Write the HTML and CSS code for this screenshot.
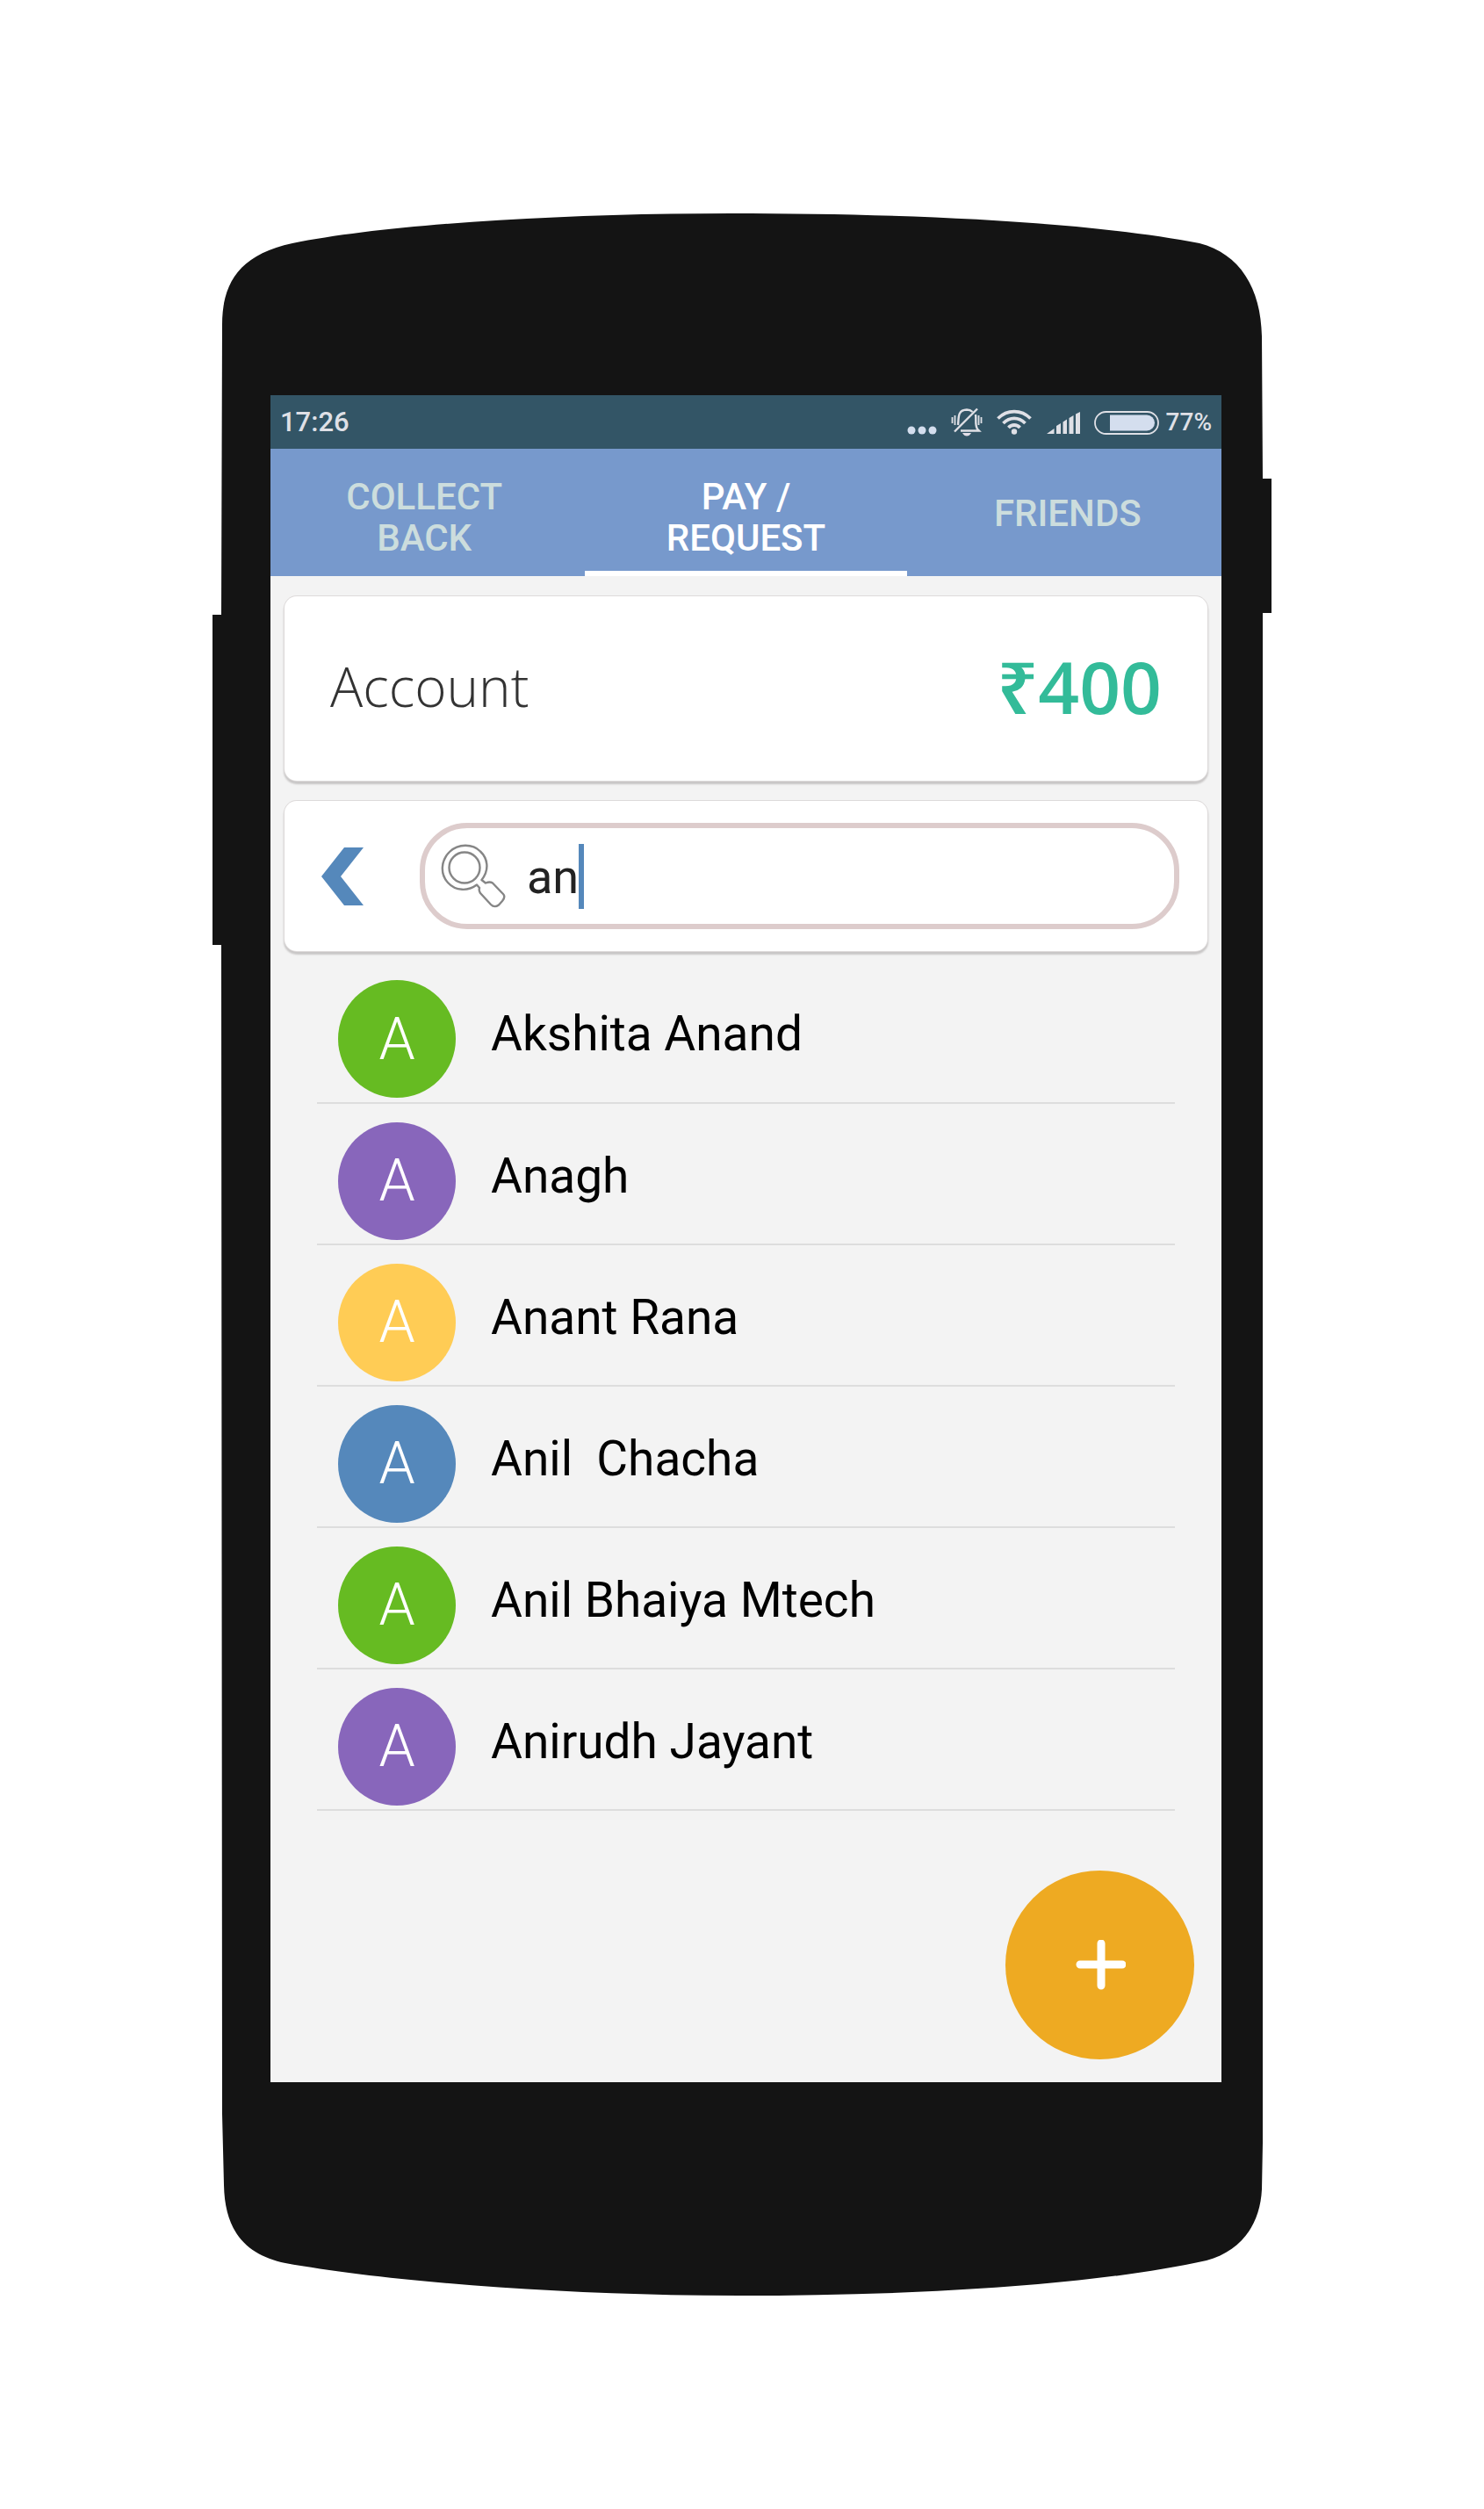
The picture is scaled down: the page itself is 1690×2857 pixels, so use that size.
FILE: index.html
```html
<!DOCTYPE html>
<html lang="en">
<head>
<meta charset="utf-8">
<meta name="viewport" content="width=device-width, initial-scale=1">
<title>Pay / Request</title>
<link rel="stylesheet" href="styles.css">
</head>
<body>
<div class="phone">
  <svg class="phone-body" viewBox="0 0 1206 2371" preserveAspectRatio="none" aria-hidden="true">
    <path fill="#141414" d="M11 127C11 80 30 47 91 34C200 12 400 0 590 0C800 0 1000 10 1124 34C1170 46 1194 85 1195 140L1196 302H1206V455H1196V2197L1195 2250C1193 2290 1172 2320 1132 2331C1000 2360 800 2371 600 2371C400 2371 200 2355 83 2334C40 2325 14 2300 13 2245L11 2164L10 833H0V457H10Z"/>
  </svg>
  <div class="screen">
    <header class="status">
      <span class="clock">17:26</span>
      <span class="status-icons">
        <svg class="dots" width="34" height="34" viewBox="0 0 34 34" aria-hidden="true"><g fill="#d4deee"><circle cx="5" cy="26" r="4.5"/><circle cx="17" cy="26" r="4.5"/><circle cx="29" cy="26" r="4.5"/></g></svg>
        <svg class="bell" width="36" height="34" viewBox="0 0 36 34" aria-hidden="true"><g fill="none" stroke="#dfe0e6" stroke-width="2.4"><path d="M8 20C9 12 7 3 18 2.500C21 2.500 23 3.500 24.500 5M28 8C29 14 27 19 30 24.500L32 26.500H11M4 27.500L30 1.500"/><path stroke-width="1.800" d="M4.500 9V20M1.500 11V18M31.500 9V20M34.500 11V18"/></g><path fill="#e4dfe9" d="M13 29H23Q21 32.500 18 32.500Q15 32.500 13 29Z"/></svg>
        <svg class="wifi" width="40" height="34" viewBox="0 0 40 34" aria-hidden="true"><g fill="none" stroke="#dfe0e6" stroke-width="3.800"><path d="M1.500 12.500C12 2 28 2 38.500 12.500M7.500 18C15 10.500 25 10.500 32.500 18M13.500 23C17 19 23 19 26.500 23"/></g><circle cx="20" cy="27.500" r="3.200" fill="#dfe0e6"/></svg>
        <svg class="signal" width="38" height="34" viewBox="0 0 38 34" aria-hidden="true"><path fill="#dfe0e6" d="M0 30L8.500 24V30ZM11 30V21L16 18V30ZM18.500 30V16.500L23 13.500V30ZM25.500 30V12L30.500 9V30ZM33 30V7.500L38 5V30Z"/></svg>
        <svg class="battery" width="74" height="34" viewBox="0 0 74 34" aria-hidden="true"><rect x="1" y="5" width="72" height="25" rx="12.500" fill="none" stroke="#dfe0e6" stroke-width="1.800"/><path fill="#d4deee" d="M18 8.500H60A9 9 0 0 1 60 26.500H18Z"/></svg>
        <span class="percent">77%</span>
      </span>
    </header>
    <nav class="tabs">
      <a class="tab" href="#collect">COLLECT<br>BACK</a>
      <a class="tab tab-active" href="#pay" aria-current="page">PAY /<br>REQUEST</a>
      <a class="tab tab-single" href="#friends">FRIENDS</a>
    </nav>
    <main class="content">
      <section class="card account">
        <span class="account-label">Account</span>
        <span class="amount">₹400</span>
      </section>
      <section class="card finder">
        <button class="back" type="button" aria-label="Back">
          <svg width="48" height="66" viewBox="0 0 48 66" aria-hidden="true"><path fill="#5588bb" d="M26 0H48L22 33L48 66H26L0 33Z"/></svg>
        </button>
        <div class="search">
          <label class="search-icon" for="q" aria-label="Search contacts">
            <svg width="74" height="74" viewBox="0 0 74 74" aria-hidden="true"><g fill="#fff" stroke="#868686" stroke-width="2.400" stroke-linejoin="round"><path d="M46.500 41C56 29 53 16 45 8.500C36 -.500 20 -.500 10 9C0 19 -1 34 8 44C17 54 31 54 41 46.500L44 50Q43 53 45 56L57 69Q61 73 66 69.500L70 65Q74 60 71 57L59 44.500Q56 42.500 51 44.500Z"/><circle cx="27" cy="27" r="17.500"/></g></svg>
          </label>
          <input class="query" id="q" type="text" value="an" autocomplete="off">
          <span class="caret"></span>
        </div>
      </section>
      <ul class="contacts">
        <li class="contact"><span class="avatar green">A</span><span class="name">Akshita Anand</span></li>
        <li class="contact"><span class="avatar purple">A</span><span class="name">Anagh</span></li>
        <li class="contact"><span class="avatar yellow">A</span><span class="name">Anant Rana</span></li>
        <li class="contact"><span class="avatar blue">A</span><span class="name">Anil&nbsp; Chacha</span></li>
        <li class="contact"><span class="avatar green">A</span><span class="name">Anil Bhaiya Mtech</span></li>
        <li class="contact"><span class="avatar purple">A</span><span class="name">Anirudh Jayant</span></li>
      </ul>
    </main>
    <button class="fab" type="button" aria-label="Add">
      <svg width="58" height="58" viewBox="0 0 58 58" aria-hidden="true"><path stroke="#fff" stroke-width="9" stroke-linecap="round" d="M30 4V52M6 28H54"/></svg>
    </button>
  </div>
</div>
</body>
</html>
```
FILE: styles.css
```css
* {
  box-sizing: border-box;
}

body {
  margin: 0;
  padding: 243px 16px;
  background: #fff;
  font-family: Roboto, "Liberation Sans", sans-serif;
}

.phone {
  position: relative;
  max-width: 1206px;
  margin: 0 auto;
  padding: 207px 57px 243px 66px;
}

.phone-body {
  position: absolute;
  inset: 0;
  width: 100%;
  height: 100%;
}

.screen {
  position: relative;
  min-height: 1921px;
  overflow: hidden;
  background: #f3f3f3;
}

.status {
  display: flex;
  align-items: center;
  justify-content: space-between;
  height: 61px;
  padding: 0 11px;
  background: #335566;
  color: #dfe0e6;
  font-weight: 500;
}

.clock {
  font-size: 31px;
}

.status-icons {
  display: flex;
  align-items: center;
}

.bell {
  margin-left: 16px;
}

.wifi {
  margin-left: 16px;
}

.signal {
  margin-left: 17px;
}

.battery {
  margin-left: 16px;
}

.percent {
  margin-left: 8px;
  font-size: 28px;
}

.tabs {
  display: grid;
  grid-template-columns: repeat(3, 1fr);
  height: 145px;
  margin: 0 -8px;
  background: #7799cc;
}

.tab {
  display: flex;
  align-items: center;
  justify-content: center;
  padding-top: 16px;
  border-bottom: 6px solid transparent;
  color: #ccdddd;
  font-size: 42px;
  font-weight: 500;
  line-height: 47px;
  text-align: center;
  text-decoration: none;
}

.tab-active {
  border-bottom-color: #fff;
  color: #fff;
}

.tab-single {
  padding-top: 8px;
}

.content {
  padding: 23px 16px 0;
}

.card {
  display: flex;
  align-items: center;
  border-radius: 14px;
  background: #fff;
  box-shadow: 0 0 0 1px #dddada, 0 3px 2px 1px #c8c6c6;
}

.account {
  justify-content: space-between;
  height: 210px;
  padding: 0 52px 6px;
  font-family: "Open Sans", "Noto Sans", sans-serif;
}

.account-label {
  color: #333;
  font-size: 62px;
  font-weight: 300;
}

.amount {
  color: #33bb99;
  font-size: 82px;
  font-weight: 600;
}

.finder {
  height: 171px;
  margin-top: 23px;
  padding: 0 32px 0 42px;
}

.back {
  display: flex;
  padding: 0;
  border: 0;
  background: none;
}

.search {
  display: flex;
  flex: 1;
  align-items: center;
  height: 121px;
  margin-left: 64px;
  padding-left: 18px;
  border: 6px solid #ddcccc;
  border-radius: 54px;
}

.search-icon {
  display: flex;
}

.query {
  field-sizing: content;
  min-width: 0;
  margin-left: 24px;
  padding: 2px 0 0;
  border: 0;
  outline: 0;
  background: none;
  color: #222;
  font: 400 54px/72px Roboto, "Liberation Sans", sans-serif;
}

.caret {
  width: 6px;
  height: 74px;
  background: #5588bb;
}

.contacts {
  margin: 12px 21px 0;
  padding: 0 16px;
  list-style: none;
}

.contact {
  display: flex;
  align-items: center;
  height: 161px;
  padding: 16px 24px 0;
  border-bottom: 2px solid #ddd;
}

.contact:first-child {
  height: 162px;
}

.avatar {
  display: flex;
  align-items: center;
  justify-content: center;
  width: 134px;
  height: 134px;
  border-radius: 50%;
  color: #fff;
  font-size: 66px;
  font-weight: 300;
}

.green {
  background: #66bb22;
}

.purple {
  background: #8866bb;
}

.yellow {
  background: #ffcc55;
}

.blue {
  background: #5588bb;
}

.name {
  padding-bottom: 12px;
  margin-left: 40px;
  color: #000;
  font-size: 55px;
}

.fab {
  position: absolute;
  right: 31px;
  bottom: 26px;
  display: flex;
  align-items: center;
  justify-content: center;
  width: 215px;
  height: 215px;
  padding: 0;
  border: 0;
  border-radius: 50%;
  background: #eeaa22;
}
```
